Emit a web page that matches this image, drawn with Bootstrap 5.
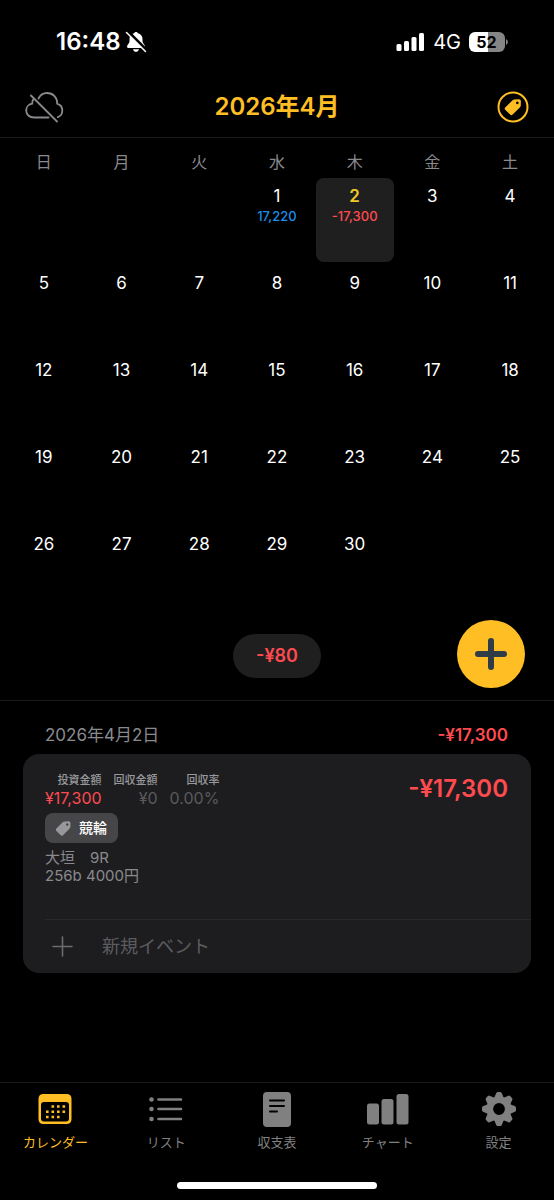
<!DOCTYPE html>
<html lang="ja" data-bs-theme="dark">
<head>
<meta charset="utf-8">
<meta name="viewport" content="width=device-width, initial-scale=1">
<title>カレンダー</title>
<link href="https://cdn.jsdelivr.net/npm/bootstrap@5.3.0/dist/css/bootstrap.min.css" rel="stylesheet">
<style>
  :root { --amber: #ffbf24; --loss: #ff4a50; --gain: #1a8fe8; --muted: #8a8a8e; --line: #1a1a1b; --panel: #1d1d1f; }
  body { background: #000; color: #fff; font-family: Inter, "Noto Sans CJK JP", sans-serif; font-size: 16px; line-height: 24px; }
  svg { display: block; flex: none; }
  .status-bar { height: 77px; padding: 6px 46px 0 56px; }
  .clock { font-size: 24px; font-weight: 600; }
  .carrier { font-size: 20px; }
  .top-bar { display: grid; grid-template-columns: 1fr auto 1fr; align-items: center; height: 61px; padding: 0 25px; border-bottom: 1px solid var(--line); }
  .month-title { font-size: 24px; line-height: 30px; font-weight: 600; }
  .bare { background: none; border: 0; padding: 0; }
  .month { width: calc(100% - 10px); margin: 0 5px; table-layout: fixed; border-collapse: collapse; text-align: center; }
  .month th { height: 40px; padding: 12px 0 4px; font-size: 16px; font-weight: 400; color: var(--muted); }
  .month td { height: 87px; padding: 0 0 3px; vertical-align: top; }
  .day { display: flex; flex-direction: column; align-items: center; justify-content: flex-start; width: 100%; height: 84px; padding: 6px 0 0; border: 0; border-radius: 8px; background: none; color: #fff; font-size: 17px; line-height: 24px; }
  .day small { font-size: 13px; line-height: 16px; font-weight: 500; }
  .day.selected { background: #1f1f1f; }
  .day.selected b { color: #f0c928; font-weight: 600; }
  .summary { display: grid; grid-template-columns: 1fr auto 1fr; align-items: center; padding: 7px 29px 8px; border-bottom: 1px solid var(--line); }
  .total-pill { height: 44px; padding: 0 23px; border-radius: 22px; background: #1f1f1f; font-size: 18px; line-height: 44px; font-weight: 600; }
  .fab { width: 68px; height: 68px; border: 0; border-radius: 50%; background: var(--amber); color: #2f3b47; }
  .day-head { padding: 22px 46px 7px 45px; font-size: 17px; }
  .day-title { font-size: 17px; line-height: 24px; font-weight: 400; }
  .entry { margin: 0 23px; border-radius: 16px; background: var(--panel); }
  .entry-main { min-height: 165px; padding: 17px 23px 24px 22px; }
  .figures { display: flex; gap: 12px; text-align: right; line-height: 18px; }
  .figures dt { font-size: 11px; font-weight: 500; color: #98989c; }
  .figures dd { margin: 0; font-size: 16px; color: #5a5a5d; }
  .category { height: 30px; margin: 6px 0; padding: 0 11px; border-radius: 8px; background: #464648; font-size: 14px; font-weight: 500; }
  .memo { font-size: 15px; line-height: 18px; }
  .entry-total { font-size: 24px; line-height: 36px; font-weight: 600; }
  .new-event { margin-left: 22px; height: 54px; padding-left: 7px; gap: 29px; border-top: 1px solid #29292b; color: #6c6c70; }
  .new-event input { background: none; border: 0; padding: 0; outline: 0; color: #fff; font-size: 18px; }
  .new-event input::placeholder { color: #5c5c5f; opacity: 1; }
  .tab-bar { border-top: 1px solid var(--line); padding-top: 6px; }
  .tab-bar a { color: #808080; font-size: 13px; line-height: 18px; text-decoration: none; }
  .tab-bar a.active { color: var(--amber); }
  .home-bar { width: 36%; height: 7px; margin: 31px auto 11px; border-radius: 4px; background: #fff; }
  .amber { color: var(--amber); }
  .loss, .figures dd.loss { color: var(--loss); }
  .gain { color: var(--gain); }
  .dim { color: var(--muted); }
</style>
</head>
<body>
<div class="d-flex flex-column min-vh-100">

  <div class="status-bar d-flex align-items-center justify-content-between">
    <div class="d-flex align-items-center gap-1">
      <span class="clock">16:48</span>
      <svg width="22" height="22" viewBox="0 0 22 22" fill="currentColor" aria-hidden="true">
        <path d="M11 1c1 0 1.700.6 1.900 1.300 3 .8 4.600 3 4.600 5.800v2.500c0 2 2.500 3.200 2.500 5.100 0 .8-.5 1.200-1.300 1.200H3.300c-.8 0-1.300-.4-1.300-1.200 0-1.900 2.500-3.100 2.500-5.100V8.100c0-2.800 1.600-5 4.600-5.800C9.300 1.600 10 1 11 1zM8 18.200h6c-.3 1.500-1.500 2.600-3 2.600s-2.700-1.100-3-2.600z"/>
        <path d="M3 .5 22 19.500" stroke="#000" stroke-width="3"/>
        <path d="M1.500 1.500 20.500 20.500" stroke="currentColor" stroke-width="1.500" stroke-linecap="round"/>
      </svg>
    </div>
    <div class="d-flex align-items-center gap-2">
      <svg width="29" height="18" viewBox="0 0 29 18" fill="currentColor" aria-hidden="true">
        <rect x="0.500" y="11" width="5" height="7" rx="1.500"/><rect x="8" y="8" width="5" height="10" rx="1.500"/><rect x="15.500" y="4" width="5" height="14" rx="1.500"/><rect x="23" y="0" width="5" height="18" rx="1.500"/>
      </svg>
      <span class="carrier">4G</span>
      <svg width="39" height="20" viewBox="0 0 39 20" role="img" aria-label="52">
        <path d="M6 0H19V20H6a6 6 0 0 1-6-6V6a6 6 0 0 1 6-6z" fill="#fff"/>
        <path d="M19 0H30a6 6 0 0 1 6 6v8a6 6 0 0 1-6 6H19z" fill="#858585"/>
        <path d="M37 7a3.300 3.300 0 0 1 0 6z" fill="#858585"/>
        <text x="17.500" y="16" text-anchor="middle" font-size="16" font-weight="700" fill="#000">52</text>
      </svg>
    </div>
  </div>

  <header class="top-bar">
    <button class="bare dim me-auto" type="button" aria-label="同期オフ">
      <svg width="39" height="32" viewBox="0 0 39 32" fill="none" stroke="currentColor" stroke-width="1.800" stroke-linecap="round" aria-hidden="true">
        <path d="M23.500 26.500H9C4.500 26.500 1.200 23.500 1.200 19.500c0-3.400 2.600-6.300 6-6.800-.2-1.500.3-3.200 1.200-4.500M13.500 7.500C15.200 4 18.500 2 22 2c6 0 10.500 4.500 10.200 10.700C35.300 13.700 37.300 16 37.300 19.500c0 3-1.700 5.700-4.500 6.600"/>
        <path d="M6 4.500 32 30.500"/>
      </svg>
    </button>
    <h1 class="month-title amber m-0">2026年4月</h1>
    <button class="bare amber ms-auto" type="button" aria-label="タグ">
      <svg width="32" height="32" viewBox="0 0 32 32" fill="currentColor" aria-hidden="true">
        <circle cx="16" cy="16" r="14.500" fill="none" stroke="currentColor" stroke-width="2"/>
        <path fill-rule="evenodd" d="M8.200 16.500 15.300 9.500q.9-.9 2.200-1l4.500-.2q1.800 0 1.900 1.800l-.1 4.200q-.1 1.300-1 2.200L15.600 23.600q-1.200 1.200-2.400 0L8.200 18.800q-1.100-1.200 0-2.300zM20.300 10.600a1.300 1.300 0 1 0 .1 0z"/>
      </svg>
    </button>
  </header>

  <main>
    <table class="month">
      <thead><tr><th>日</th><th>月</th><th>火</th><th>水</th><th>木</th><th>金</th><th>土</th></tr></thead>
      <tbody>
        <tr><td></td><td></td><td></td>
          <td><button class="day" type="button">1<small class="gain">17,220</small></button></td>
          <td><button class="day selected" type="button"><b>2</b><small class="loss">-17,300</small></button></td>
          <td><button class="day" type="button">3</button></td><td><button class="day" type="button">4</button></td></tr>
        <tr><td><button class="day" type="button">5</button></td><td><button class="day" type="button">6</button></td><td><button class="day" type="button">7</button></td><td><button class="day" type="button">8</button></td><td><button class="day" type="button">9</button></td><td><button class="day" type="button">10</button></td><td><button class="day" type="button">11</button></td></tr>
        <tr><td><button class="day" type="button">12</button></td><td><button class="day" type="button">13</button></td><td><button class="day" type="button">14</button></td><td><button class="day" type="button">15</button></td><td><button class="day" type="button">16</button></td><td><button class="day" type="button">17</button></td><td><button class="day" type="button">18</button></td></tr>
        <tr><td><button class="day" type="button">19</button></td><td><button class="day" type="button">20</button></td><td><button class="day" type="button">21</button></td><td><button class="day" type="button">22</button></td><td><button class="day" type="button">23</button></td><td><button class="day" type="button">24</button></td><td><button class="day" type="button">25</button></td></tr>
        <tr><td><button class="day" type="button">26</button></td><td><button class="day" type="button">27</button></td><td><button class="day" type="button">28</button></td><td><button class="day" type="button">29</button></td><td><button class="day" type="button">30</button></td><td></td><td></td></tr>
      </tbody>
    </table>

    <div class="summary">
      <span></span>
      <span class="total-pill loss">-¥80</span>
      <button class="fab d-flex align-items-center justify-content-center p-0 ms-auto mb-1" type="button" aria-label="追加">
        <svg width="32" height="32" viewBox="0 0 32 32" fill="none" stroke="currentColor" stroke-width="6" stroke-linecap="round" aria-hidden="true"><path d="M16 3v26M3 16h26"/></svg>
      </button>
    </div>

    <section>
      <div class="day-head d-flex justify-content-between">
        <h2 class="day-title dim m-0">2026年4月2日</h2>
        <span class="loss fw-semibold">-¥17,300</span>
      </div>
      <div class="entry">
        <div class="entry-main d-flex justify-content-between">
          <div>
            <dl class="figures m-0">
              <div><dt>投資金額</dt><dd class="loss">¥17,300</dd></div>
              <div><dt>回収金額</dt><dd>¥0</dd></div>
              <div><dt>回収率</dt><dd>0.00%</dd></div>
            </dl>
            <span class="category d-inline-flex align-items-center gap-2">
              <svg width="15" height="15" viewBox="8 8 16.500 16.500" fill="#98989c" aria-hidden="true"><path fill-rule="evenodd" d="M8.200 16.500 15.300 9.500q.9-.9 2.200-1l4.500-.2q1.800 0 1.900 1.800l-.1 4.200q-.1 1.300-1 2.200L15.600 23.600q-1.200 1.200-2.400 0L8.200 18.800q-1.100-1.200 0-2.300zM20.300 10.600a1.300 1.300 0 1 0 .1 0z"/></svg>競輪</span>
            <p class="memo dim m-0">大垣　9R<br>256b 4000円</p>
          </div>
          <span class="entry-total loss">-¥17,300</span>
        </div>
        <label class="new-event d-flex align-items-center">
          <svg width="21" height="21" viewBox="0 0 21 21" fill="none" stroke="currentColor" stroke-width="1.600" stroke-linecap="round" aria-hidden="true"><path d="M10.500 1v19M1 10.500h19"/></svg>
          <input class="flex-grow-1" type="text" placeholder="新規イベント" aria-label="新規イベント">
        </label>
      </div>
    </section>
  </main>

  <footer class="mt-auto">
    <nav class="tab-bar row row-cols-5 g-0 text-center" aria-label="メイン">
      <a class="active d-flex flex-column align-items-center" href="#" aria-current="page">
        <svg class="mb-1" width="40" height="40" viewBox="0 0 40 40" aria-hidden="true">
          <path fill="currentColor" fill-rule="evenodd" d="M8.500 5h23q5 0 5 5v20q0 5-5 5h-23q-5 0-5-5V10q0-5 5-5zM9 13q-3 0-3 3V29.500q0 3 3 3h22q3 0 3-3V16q0-3-3-3z"/>
          <path stroke="currentColor" stroke-width="2.600" stroke-dasharray="2.600 2.900" d="M16.500 17.500h13.700M11 22.700h19.100M11 28h13.600"/>
        </svg>カレンダー</a>
      <a class="d-flex flex-column align-items-center" href="#">
        <svg class="mb-1" width="40" height="40" viewBox="0 0 40 40" fill="currentColor" aria-hidden="true">
          <circle cx="5.500" cy="10.500" r="2.300"/><circle cx="5.500" cy="20" r="2.300"/><circle cx="5.500" cy="30" r="2.300"/>
          <path stroke="currentColor" stroke-width="2.600" stroke-linecap="round" d="M12.500 10.500h22.500M12.500 20h22.500M12.500 30h22.500"/>
        </svg>リスト</a>
      <a class="d-flex flex-column align-items-center" href="#">
        <svg class="mb-1" width="40" height="40" viewBox="0 0 40 40" aria-hidden="true">
          <rect x="6" y="3" width="28" height="35" rx="4" fill="currentColor"/>
          <path stroke="#000" stroke-width="2" stroke-linecap="round" d="M13 11.500h14M13 17h14M13 22.500h7"/>
        </svg>収支表</a>
      <a class="d-flex flex-column align-items-center" href="#">
        <svg class="mb-1" width="42" height="40" viewBox="0 0 42 40" fill="currentColor" aria-hidden="true">
          <rect x="0" y="14.500" width="12" height="21" rx="2.500"/><rect x="14.500" y="10" width="12" height="25.500" rx="2.500"/><rect x="29.500" y="5" width="12" height="30.500" rx="2.500"/>
        </svg>チャート</a>
      <a class="d-flex flex-column align-items-center" href="#">
        <svg class="mb-1" width="40" height="40" viewBox="-20 -20 40 40" fill="currentColor" aria-hidden="true">
          <defs><path id="tooth" d="M-5.200-10 -3-15.500Q-2.600-17-1.300-17H1.300Q2.600-17 3-15.500L5.200-10z"/></defs>
          <circle r="9.200" fill="none" stroke="currentColor" stroke-width="6.600"/>
          <use href="#tooth"/><use href="#tooth" transform="rotate(45)"/><use href="#tooth" transform="rotate(90)"/><use href="#tooth" transform="rotate(135)"/><use href="#tooth" transform="rotate(180)"/><use href="#tooth" transform="rotate(225)"/><use href="#tooth" transform="rotate(270)"/><use href="#tooth" transform="rotate(315)"/>
        </svg>設定</a>
    </nav>
    <div class="home-bar"></div>
  </footer>
</div>
<script src="https://cdn.jsdelivr.net/npm/bootstrap@5.3.0/dist/js/bootstrap.bundle.min.js"></script>
</body>
</html>
